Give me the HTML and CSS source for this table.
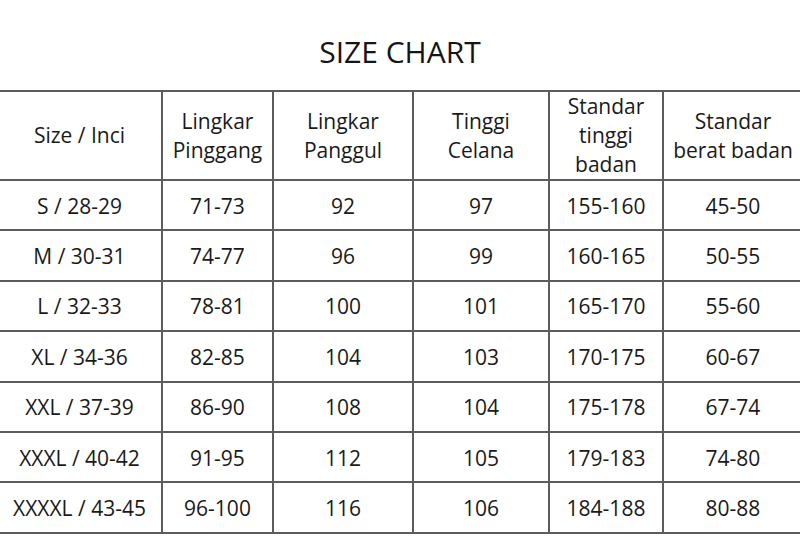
FILE: index.html
```
<!DOCTYPE html>
<html lang="id">
<head>
<meta charset="utf-8">
<title>Size Chart</title>
<link rel="stylesheet" href="styles.css">
</head>
<body>
<main class="page">
  <h1 class="title">SIZE CHART</h1>
  <table class="chart">
    <colgroup>
      <col class="c-size">
      <col class="c-pinggang">
      <col class="c-panggul">
      <col class="c-celana">
      <col class="c-tinggi">
      <col class="c-berat">
    </colgroup>
    <thead>
      <tr>
        <th>Size / Inci</th>
        <th>Lingkar<br>Pinggang</th>
        <th>Lingkar<br>Panggul</th>
        <th>Tinggi<br>Celana</th>
        <th>Standar<br>tinggi<br>badan</th>
        <th>Standar<br>berat badan</th>
      </tr>
    </thead>
    <tbody>
      <tr><td>S / 28-29</td><td>71-73</td><td>92</td><td>97</td><td>155-160</td><td>45-50</td></tr>
      <tr><td>M / 30-31</td><td>74-77</td><td>96</td><td>99</td><td>160-165</td><td>50-55</td></tr>
      <tr><td>L / 32-33</td><td>78-81</td><td>100</td><td>101</td><td>165-170</td><td>55-60</td></tr>
      <tr><td>XL / 34-36</td><td>82-85</td><td>104</td><td>103</td><td>170-175</td><td>60-67</td></tr>
      <tr><td>XXL / 37-39</td><td>86-90</td><td>108</td><td>104</td><td>175-178</td><td>67-74</td></tr>
      <tr><td>XXXL / 40-42</td><td>91-95</td><td>112</td><td>105</td><td>179-183</td><td>74-80</td></tr>
      <tr><td>XXXXL / 43-45</td><td>96-100</td><td>116</td><td>106</td><td>184-188</td><td>80-88</td></tr>
    </tbody>
  </table>
</main>
</body>
</html>
```

FILE: styles.css
```
html, body {
  margin: 0;
  padding: 0;
  background: #ffffff;
  overflow: hidden;
}

.page {
  font-family: "Open Sans", "Noto Sans", "DejaVu Sans", sans-serif;
  color: #1a1a1a;
}

.title {
  margin: 0;
  padding: 32px 0 18px;
  font-size: 30px;
  line-height: 40px;
  font-weight: 400;
  text-align: center;
  color: #151515;
}

.chart {
  border-collapse: collapse;
  table-layout: fixed;
  width: 806px;
  margin-left: -4px;
}

.c-size { width: 165px; }
.c-pinggang { width: 111px; }
.c-panggul { width: 140px; }
.c-celana { width: 136px; }
.c-tinggi { width: 114px; }
.c-berat { width: 140px; }

.chart th,
.chart td {
  border: 2px solid #5c5c5c;
  padding: 0;
  text-align: center;
  vertical-align: middle;
  font-size: 21px;
  font-weight: 400;
  line-height: 29px;
  white-space: nowrap;
}

.chart thead th {
  height: 87px;
}

.chart tbody td {
  height: 46.4px;
  padding-top: 2px;
}
```
